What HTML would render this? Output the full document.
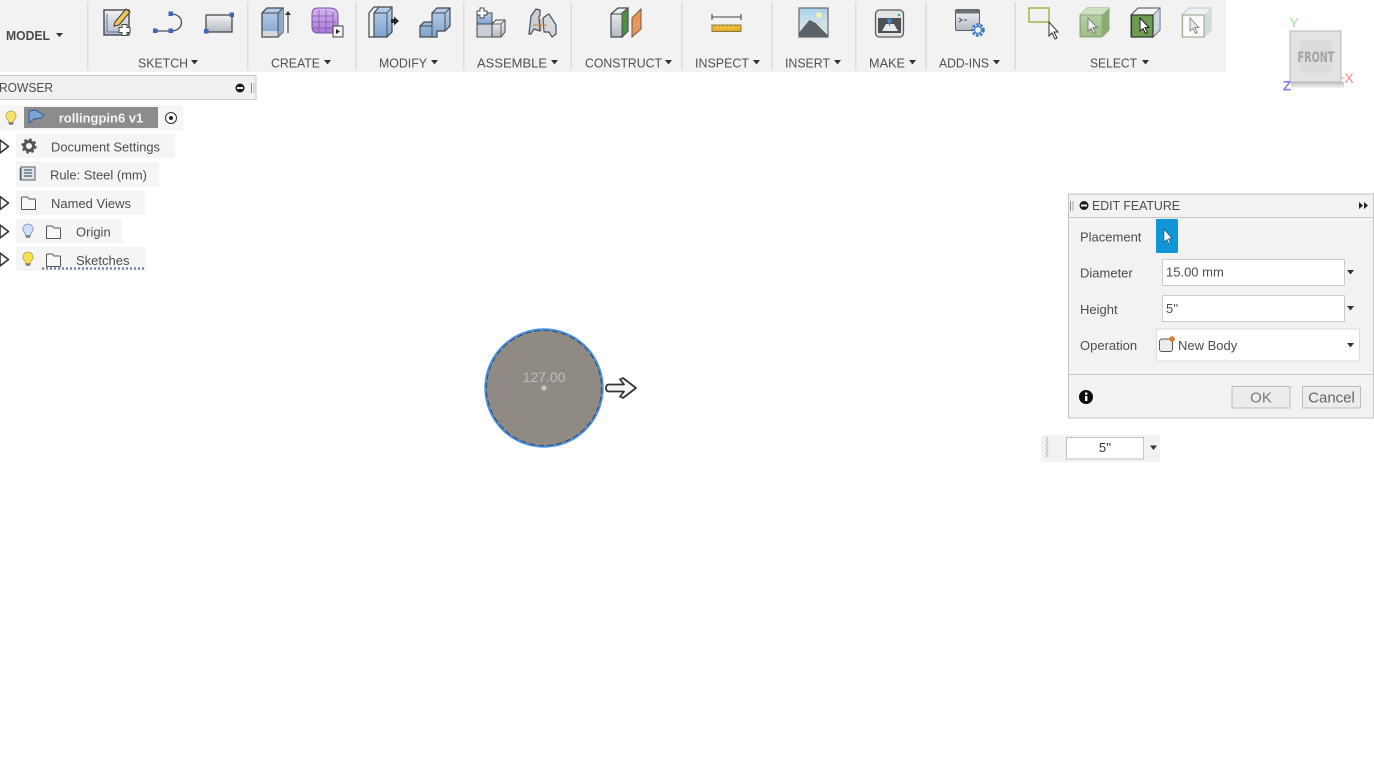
<!DOCTYPE html>
<html><head><meta charset="utf-8"><style>
html,body{margin:0;padding:0;background:#fff;width:1374px;height:773px;overflow:hidden}
svg{display:block;filter:blur(.3px)}
text{font-family:"Liberation Sans",sans-serif}
.l{font-size:13px;fill:#505050}
.t{font-size:13px;fill:#4d4d4d}
.s{stroke:#45494e;stroke-width:1.4}
</style></head><body>
<svg width="1374" height="773" viewBox="0 0 1374 773" xmlns="http://www.w3.org/2000/svg">
<defs>
<linearGradient id="bl" x1="0" y1="0" x2="0" y2="1"><stop offset="0" stop-color="#b8d0ea"/><stop offset="1" stop-color="#7fa3cc"/></linearGradient>
<linearGradient id="gr" x1="0" y1="0" x2="0" y2="1"><stop offset="0" stop-color="#f2f3f5"/><stop offset="1" stop-color="#b4b9c2"/></linearGradient>
<linearGradient id="sky" x1="0" y1="0" x2="0" y2="1"><stop offset="0" stop-color="#a8d0ec"/><stop offset="1" stop-color="#eef3e6"/></linearGradient>
<linearGradient id="pu" x1="0" y1="0" x2="0" y2="1"><stop offset="0" stop-color="#d5b5ee"/><stop offset="1" stop-color="#a878d6"/></linearGradient>
<linearGradient id="gc" x1="0" y1="0" x2="0" y2="1"><stop offset="0" stop-color="#bcd3aa"/><stop offset="1" stop-color="#9dbd88"/></linearGradient>
<linearGradient id="ruler" x1="0" y1="0" x2="0" y2="1"><stop offset="0" stop-color="#f5cd4a"/><stop offset="1" stop-color="#dfa520"/></linearGradient>
<linearGradient id="sh" x1="0" y1="0" x2="0" y2="1"><stop offset="0" stop-color="#bdbdbd"/><stop offset="1" stop-color="#f4f4f4"/></linearGradient>
</defs>
<rect width="1374" height="773" fill="#fff"/>
<!-- toolbar -->
<rect x="0" y="0" width="1226" height="72" fill="#f2f2f2"/>
<g fill="#dcdcdc">
<rect x="87" y="2" width="1.5" height="68"/><rect x="247" y="2" width="1.5" height="68"/><rect x="355" y="2" width="1.5" height="68"/><rect x="463" y="2" width="1.5" height="68"/><rect x="570.500" y="2" width="1.5" height="68"/><rect x="681" y="2" width="1.5" height="68"/><rect x="771.500" y="2" width="1.5" height="68"/><rect x="855" y="2" width="1.5" height="68"/><rect x="925" y="2" width="1.5" height="68"/><rect x="1014.500" y="2" width="1.5" height="68"/>
</g>
<text x="6" y="40" font-weight="bold" fill="#4a4a4a" style="font-size:13px" textLength="44" lengthAdjust="spacingAndGlyphs">MODEL</text>
<path d="M56 33h7l-3.5 4z" fill="#333"/>
<g>
<text class="l" x="138" y="67.500" textLength="50" lengthAdjust="spacingAndGlyphs">SKETCH</text><path d="M191 60h7l-3.500 4.500z" fill="#333"/>
<text class="l" x="271" y="67.500" textLength="49" lengthAdjust="spacingAndGlyphs">CREATE</text><path d="M324 60h7l-3.500 4.500z" fill="#333"/>
<text class="l" x="379" y="67.500" textLength="48" lengthAdjust="spacingAndGlyphs">MODIFY</text><path d="M431 60h7l-3.500 4.500z" fill="#333"/>
<text class="l" x="477" y="67.500" textLength="70" lengthAdjust="spacingAndGlyphs">ASSEMBLE</text><path d="M551 60h7l-3.500 4.500z" fill="#333"/>
<text class="l" x="585" y="67.500" textLength="77" lengthAdjust="spacingAndGlyphs">CONSTRUCT</text><path d="M665 60h7l-3.500 4.500z" fill="#333"/>
<text class="l" x="695" y="67.500" textLength="54" lengthAdjust="spacingAndGlyphs">INSPECT</text><path d="M753 60h7l-3.500 4.500z" fill="#333"/>
<text class="l" x="785" y="67.500" textLength="45" lengthAdjust="spacingAndGlyphs">INSERT</text><path d="M834 60h7l-3.500 4.500z" fill="#333"/>
<text class="l" x="869" y="67.500" textLength="36" lengthAdjust="spacingAndGlyphs">MAKE</text><path d="M909 60h7l-3.500 4.500z" fill="#333"/>
<text class="l" x="939" y="67.500" textLength="50" lengthAdjust="spacingAndGlyphs">ADD-INS</text><path d="M993 60h7l-3.500 4.500z" fill="#333"/>
<text class="l" x="1090" y="67.500" textLength="47" lengthAdjust="spacingAndGlyphs">SELECT</text><path d="M1142 60h7l-3.500 4.500z" fill="#333"/>
</g>
<!-- sketch create -->
<rect x="104" y="10" width="25" height="25" fill="url(#gr)" class="s"/>
<path d="M107 14v18h18" fill="none" stroke="#4a78c0" stroke-width="1"/>
<path d="M115 22l11-13 4 3-11 13-5 1z" fill="#f0c850" stroke="#444" stroke-width="1.1"/>
<path d="M121 25h5v3h3v5h-3v3h-5v-3h-3v-5h3z" transform="translate(1 -.5)" fill="#fff" stroke="#444" stroke-width="1"/>
<!-- line -->
<path d="M155 31h16M171 14c14 0 14 17 0 17" fill="none" stroke="#4a4f55" stroke-width="1.3"/>
<g fill="#3f68b8"><rect x="153" y="28.500" width="4.500" height="4.500"/><rect x="168.500" y="28.500" width="4.500" height="4.500"/><rect x="168.500" y="11.500" width="4.500" height="4.500"/></g>
<!-- rect -->
<rect x="206" y="15" width="26" height="17" fill="url(#gr)" stroke="#45494e" stroke-width="1.3"/>
<rect x="229.500" y="12.500" width="4.500" height="4.500" fill="#3f68b8"/><rect x="204" y="29" width="4.500" height="4.500" fill="#3f68b8"/>
<!-- extrude -->
<path d="M262 13l5-5h16v24l-5 5h-16z" fill="url(#bl)" stroke="#45494e" stroke-width="1.3"/>
<path d="M278 13l5-5v24l-5 5z" fill="#8fabc9"/>
<path d="M262 13h16l5-5M278 13v24" fill="none" stroke="#45494e" stroke-width="1"/>
<rect x="262.700" y="31" width="15" height="5.300" fill="#d6d8da"/>
<path d="M288 33V14" stroke="#666" stroke-width="1.500"/><path d="M285 15l3-4 3 4z" fill="#333"/>
<!-- form -->
<path d="M312 14q0-6 6-6h12q8 0 8 8v12q0 5-5 5h-15q-6 0-6-6z" fill="url(#pu)" stroke="#7a54a8" stroke-width="1"/>
<path d="M312 16h22M312 22h24M312 28h24M319 10v23M326 10v23M333 12v20" stroke="#7d58ad" stroke-width=".8" fill="none"/>
<rect x="333" y="26" width="10" height="11" fill="#f5f5f5" stroke="#444"/><path d="M336 29l4 2.500-4 2.500z" fill="#222"/>
<!-- press pull -->
<path d="M369 13l5-6h5v28l-5 2h-5z" fill="#f3f3f3" stroke="#45494e" stroke-width="1.200"/>
<path d="M374 13l5-6h13v25l-5 5h-13z" fill="url(#bl)" stroke="#45494e" stroke-width="1.200"/>
<path d="M374 13h13l5-6M387 13v24" stroke="#45494e" stroke-width=".9" fill="none"/>
<path d="M391 19h3v-2.500l5 4.500-5 4.500v-2.500h-3z" fill="#2b2b2b"/>
<!-- combine -->
<path d="M420 26l4-4h8v-9l5-5h13v18l-5 5h-8v6h-17z" fill="url(#bl)" stroke="#45494e" stroke-width="1.200"/>
<path d="M432 13h13l5-5M445 13v18M420 26h12v11M432 22v4" stroke="#45494e" stroke-width=".9" fill="none"/>
<!-- assemble -->
<rect x="477" y="13" width="15" height="11" fill="url(#bl)" stroke="#45494e"/>
<rect x="477" y="24" width="15" height="13" fill="#c8ced6" stroke="#45494e"/>
<path d="M492 24l4-4h9v12l-4 5h-9z" fill="url(#gr)" stroke="#45494e"/>
<path d="M492 24h9l4-4M501 24v13" stroke="#45494e" stroke-width=".8" fill="none"/>
<path d="M480 8h4v3h3v4h-3v3h-4v-3h-3v-4h3z" fill="#fff" stroke="#444"/>
<!-- joint -->
<path d="M529 34l2-18 5-7 4 1v5l-1 2 1 14-6-2-3 5z" fill="#c9ced5" stroke="#4a4f55" stroke-width="1.200"/>
<path d="M544 32l-1-14 4-3 2-1 7 11v9l-4 3-3-5z" fill="#d3d8de" stroke="#4a4f55" stroke-width="1.200"/>
<path d="M533 25h14M541 19v12" stroke="#c98a50" stroke-width="1" fill="none"/>
<!-- construct -->
<path d="M611 14l7-6h10v23l-6 6h-11z" fill="url(#gr)" stroke="#45494e" stroke-width="1.200"/>
<path d="M622 13l6-5v23l-6 6z" fill="#4e9146" stroke="#45494e" stroke-width=".9"/>
<path d="M611 14h11" stroke="#45494e"/>
<path d="M632 18l9-9v20l-9 8z" fill="#e8965a" stroke="#7a5a42" stroke-width="1"/>
<!-- inspect -->
<path d="M712 17h29M712 14v6M741 14v6" stroke="#444" stroke-width="1.100" fill="none"/>
<rect x="712" y="25" width="29" height="6.500" fill="url(#ruler)" stroke="#8d7a3c" stroke-width="1"/>
<path d="M715 25v2M719 25v2M723 25v2M727 25v2M731 25v2M735 25v2M738 25v2" stroke="#8d7a3c" stroke-width=".7"/>
<!-- insert -->
<rect x="799" y="8" width="29" height="29" fill="url(#sky)" stroke="#666" stroke-width="1.200"/>
<circle cx="819" cy="15" r="3" fill="#f5efb0"/>
<path d="M799.500 32l10-12 6 3 12 12v1.500h-28z" fill="#5b6268"/>
<path d="M815 22l12 9v-4z" fill="#c8d8d8" opacity=".7"/>
<!-- make -->
<rect x="875.500" y="10" width="28" height="27" rx="4" fill="#e2e4e6" stroke="#5a5d62" stroke-width="1.300"/>
<rect x="878" y="18" width="23" height="15" fill="#4c5157"/>
<circle cx="899" cy="15" r="1.200" fill="#3da060"/>
<path d="M882 31l4-7h8l4 7z" fill="#e8eaec"/><path d="M887 19h5l-1 4h-1v3h-1v-3h-1z" fill="#4a88d0"/>
<!-- add-ins -->
<rect x="955.500" y="9.500" width="24" height="21" rx="1.500" fill="url(#gr)" stroke="#5a5f66" stroke-width="1"/>
<rect x="955.500" y="9.500" width="24" height="4" fill="#6a6f76"/>
<path d="M959 18l3 2-3 2M964 20h3" stroke="#444" stroke-width=".9" fill="none"/>
<circle cx="978" cy="30" r="5.500" fill="#f2f2f2" stroke="#3f78c0" stroke-width="2.600" stroke-dasharray="2.600 1.400"/>
<circle cx="978" cy="30" r="3.500" fill="#f2f2f2" stroke="#3f78c0" stroke-width="1.200"/>
<!-- select -->
<rect x="1029" y="8" width="20" height="14" fill="none" stroke="#9cb84a" stroke-width="1.500"/>
<path d="M1049 22v14l3-3 3 6 2-1-3-6h4z" fill="#fff" stroke="#333" stroke-width="1"/>
<path d="M1080 15l7-7h22v22l-7 7h-22z" fill="url(#gc)" stroke="#8fab7e" stroke-width="1"/>
<path d="M1102 15l7-7v22l-7 7z" fill="#88ac72"/><path d="M1080 15l7-7h22l-7 7z" fill="#d0dfc2"/>
<rect x="1080.500" y="15" width="21.500" height="21.500" fill="none" stroke="#8fab7e"/>
<path d="M1088 18v13l3-2.500 2.500 5 2-1-2.500-5h4z" fill="#f0f0f0" stroke="#777" stroke-width=".9"/>
<path d="M1131 15l7-7h22v22l-7 7h-22z" fill="#f4f4f4" stroke="#444a52" stroke-width="1"/>
<path d="M1153 15l7-7v22l-7 7z" fill="#cfd8e2" stroke="#6a7482" stroke-width=".8"/>
<rect x="1131.500" y="15" width="21.500" height="22" fill="#6f9c50" stroke="#2d3b28" stroke-width="1.200"/>
<path d="M1140 18v13l3-2.500 2.500 5 2-1-2.500-5h4z" fill="#fff" stroke="#222" stroke-width="1"/>
<path d="M1182 15l7-7h22v22l-7 7h-22z" fill="#eef0f1" stroke="#c4c9ce" stroke-width="1"/>
<path d="M1204 15l7-7v22l-7 7z" fill="#d2dae2"/>
<rect x="1182.500" y="15" width="21.500" height="22" fill="#fbfbfb" stroke="#9db08e" stroke-width="1.200"/>
<path d="M1190 18v13l3-2.500 2.500 5 2-1-2.500-5h4z" fill="#e8e8e8" stroke="#888" stroke-width=".9"/>
<!-- view cube -->
<rect x="1291" y="82" width="53" height="6" fill="url(#sh)"/>
<rect x="1290" y="31" width="51" height="51" fill="#e3e3e3" stroke="#b4b4b4" stroke-width="1"/>
<rect x="1300" y="40" width="32" height="33" fill="#dcdcdc"/>
<text x="1316" y="62" style="font-size:14px;font-family:'DejaVu Sans Condensed','DejaVu Sans',sans-serif;font-weight:bold" fill="#a2a2a2" text-anchor="middle" textLength="37" lengthAdjust="spacingAndGlyphs">FRONT</text>
<text x="1294" y="27.500" style="font-size:14px" fill="#a0e4a0" text-anchor="middle">Y</text>
<text x="1349" y="83" style="font-size:14px" fill="#f08a80" text-anchor="middle">X</text>
<text x="1287" y="90.500" style="font-size:14px;font-weight:bold" fill="#8080e4" text-anchor="middle">Z</text>
<path d="M1341 78h4" stroke="#f0a098"/>
<!-- browser -->
<rect x="-2" y="75.500" width="258" height="24" fill="#f0f0f0" stroke="#c8c8c8"/>
<text class="t" x="-1" y="92" textLength="54" lengthAdjust="spacingAndGlyphs">ROWSER</text>
<circle cx="240" cy="88" r="4.500" fill="#1a1a1a"/><rect x="237" y="87" width="6" height="2" fill="#eee"/>
<rect x="251" y="83" width="1" height="10" fill="#888"/><rect x="253.500" y="83" width="1" height="10" fill="#bbb"/>
<g fill="#f5f5f5">
<rect x="0" y="105" width="183" height="25"/><rect x="16" y="134" width="159" height="24"/><rect x="16" y="162" width="143" height="25"/><rect x="16" y="191" width="129" height="24"/><rect x="16" y="219" width="106" height="24"/><rect x="16" y="247" width="130" height="24"/>
</g>
<rect x="24" y="107" width="134" height="21" fill="#8c8c8c"/>
<text x="101" y="122.500" text-anchor="middle" fill="#f4f4f4" style="font-size:13px;font-weight:bold">rollingpin6 v1</text>
<path d="M29 111l6-1 9 5-3 3-7 1-5 4z" fill="#7aa5d5" stroke="#2d5e9c" stroke-width="1"/>
<circle cx="171" cy="118" r="5.500" fill="#fff" stroke="#333" stroke-width="1"/><circle cx="171" cy="118" r="2" fill="#222"/>
<!-- bulbs -->
<g><path d="M11 111a5 5 0 0 1 3 9l-.5 2.500h-5l-.5-2.500a5 5 0 0 1 3-9z" fill="#f7e36a" stroke="#b0a060" stroke-width=".8"/><rect x="8.800" y="122.500" width="4.500" height="2.200" fill="#777"/></g>
<g transform="translate(17 113)"><path d="M11 111a5 5 0 0 1 3 9l-.5 2.500h-5l-.5-2.500a5 5 0 0 1 3-9z" fill="#cfe0f7" stroke="#7a90b8" stroke-width=".8"/><rect x="8.800" y="122.500" width="4.500" height="2.200" fill="#777"/></g>
<g transform="translate(17 141)"><path d="M11 111a5 5 0 0 1 3 9l-.5 2.500h-5l-.5-2.500a5 5 0 0 1 3-9z" fill="#f7e04a" stroke="#b0a060" stroke-width=".8"/><rect x="8.800" y="122.500" width="4.500" height="2.200" fill="#777"/></g>
<!-- expanders -->
<g fill="#fbfbfb" stroke="#333" stroke-width="1.600" stroke-linejoin="round">
<path d="M0 140l8.500 6.500-8.500 6.500z"/><path d="M0 196.500l8.500 6.500-8.500 6.500z"/><path d="M0 225l8.500 6.500-8.500 6.500z"/><path d="M0 253l8.500 6.500-8.500 6.500z"/>
</g>
<!-- gear -->
<circle cx="29" cy="146" r="4.500" fill="none" stroke="#555" stroke-width="3"/>
<circle cx="29" cy="146" r="6.500" fill="none" stroke="#555" stroke-width="2.200" stroke-dasharray="2.600 2.500"/>
<!-- rule icon -->
<rect x="21" y="167" width="14" height="13" fill="#dfe4e8" stroke="#55606a" stroke-width="1"/>
<path d="M24 170h8M24 173h8M24 176h8" stroke="#55606a" stroke-width="1.200"/><path d="M20.500 168v12" stroke="#55606a" stroke-width="1.600"/>
<!-- folders (tabbed) -->
<g fill="#f7f7f7" stroke="#555" stroke-width="1" stroke-linejoin="round">
<path id="f1" d="M21.500 198q0-1 1-1h5l1.500 2h6q.5 0 .5 1v9.500h-14z"/>
<path d="M46.500 227q0-1 1-1h5l1.500 2h6q.5 0 .5 1v9.500h-14z"/>
<path d="M46.500 255q0-1 1-1h5l1.500 2h6q.5 0 .5 1v9.500h-14z"/>
</g>
<text class="t" x="51" y="151.500" textLength="109" lengthAdjust="spacingAndGlyphs">Document Settings</text>
<text class="t" x="50" y="179.500" textLength="97" lengthAdjust="spacingAndGlyphs">Rule: Steel (mm)</text>
<text class="t" x="51" y="208">Named Views</text>
<text class="t" x="76" y="236.500">Origin</text>
<text class="t" x="76" y="265">Sketches</text>
<path d="M42 268.500H146" stroke="#6a8098" stroke-width="2.200" stroke-dasharray="2 2"/>
<!-- circle -->
<circle cx="544" cy="388" r="58" fill="#8f8b84"/>
<circle cx="544" cy="388" r="58.500" fill="none" stroke="#4a8fe0" stroke-width="2.400"/>
<circle cx="544" cy="388" r="57.500" fill="none" stroke="#2b3a4a" stroke-width=".8" stroke-dasharray="6 3"/>
<text x="544" y="382" text-anchor="middle" fill="#bdbdbd" style="font-size:14px">127.00</text>
<circle cx="544" cy="388" r="2.700" fill="#c4c4c4"/>
<path d="M609 384.500H624L620 379.500 623 378 636 388 623 398 620 396.500 624 391.500H609Q606 391.500 606 388T609 384.500Z" fill="#f4f4f4" stroke="#333" stroke-width="1.800" stroke-linejoin="round"/>
<!-- panel -->
<rect x="1068.500" y="194" width="305" height="224" fill="#f2f2f2" stroke="#c2c2c2"/>
<path d="M1069 217.500h304M1069 374.500h304" stroke="#c8c8c8"/>
<rect x="1070" y="201" width="1" height="10" fill="#888"/><rect x="1072.500" y="201" width="1" height="10" fill="#aaa"/>
<circle cx="1084" cy="205.500" r="4.500" fill="#1a1a1a"/><rect x="1081" y="204.500" width="6" height="2" fill="#eee"/>
<text class="t" x="1092" y="210" textLength="88" lengthAdjust="spacingAndGlyphs">EDIT FEATURE</text>
<path d="M1359 202l4 3.500-4 3.500zM1364 202l4 3.500-4 3.500z" fill="#222"/>
<text class="t" x="1080" y="241.500">Placement</text>
<rect x="1156" y="219" width="22" height="34" rx="1" fill="#0e96d6"/>
<path d="M1164 229v13l3-2.500 2 4.500 1.500-.7-2-4.500 3.500-.3z" fill="#fff" stroke="#0a4a70" stroke-width=".6"/>
<text class="t" x="1080" y="277.500">Diameter</text>
<rect x="1162.500" y="259.500" width="182" height="26" fill="#fff" stroke="#ccc"/>
<text class="t" x="1166" y="276.500" fill="#444">15.00 mm</text>
<path d="M1347 270h7l-3.500 4.500z" fill="#333"/>
<text class="t" x="1080" y="314">Height</text>
<rect x="1162.500" y="295.500" width="182" height="26" fill="#fff" stroke="#ccc"/>
<text class="t" x="1166" y="313">5''</text>
<path d="M1347 306h7l-3.500 4.500z" fill="#333"/>
<text class="t" x="1080" y="350">Operation</text>
<rect x="1156.500" y="329" width="203" height="32" fill="#fff" stroke="#dcdcdc"/>
<rect x="1159.500" y="339" width="13" height="12.500" rx="2.500" fill="#e8ecef" stroke="#555" stroke-width="1"/>
<circle cx="1172" cy="339" r="2.800" fill="#e8762a"/>
<text class="t" x="1178" y="350">New Body</text>
<path d="M1347 343h7l-3.500 4.500z" fill="#333"/>
<circle cx="1086" cy="397" r="7" fill="#0c0c0c"/>
<rect x="1085" y="396" width="2.400" height="5" fill="#fff"/><rect x="1085" y="392.500" width="2.400" height="2.200" fill="#fff"/>
<rect x="1232" y="386.500" width="58" height="21.500" fill="#ececec" stroke="#bdbdbd"/>
<text x="1261" y="402.500" text-anchor="middle" fill="#777" style="font-size:15px">OK</text>
<rect x="1302.500" y="386.500" width="58" height="21.500" fill="#ececec" stroke="#bdbdbd"/>
<text x="1331.500" y="402.500" text-anchor="middle" fill="#666" style="font-size:15px">Cancel</text>
<!-- mini input -->
<rect x="1041" y="435" width="119" height="27" fill="#f2f2f2"/>
<path d="M1046 437l2 2-2 2 2 2-2 2 2 2-2 2 2 2-2 2 2 2-2 2" fill="none" stroke="#c8c8c8" stroke-width="1.300"/>
<rect x="1066.500" y="437.500" width="77" height="21.500" fill="#fff" stroke="#c4c4c4"/>
<text x="1105" y="452" text-anchor="middle" fill="#333" style="font-size:13px">5''</text>
<path d="M1150 445.500h7l-3.500 4.500z" fill="#333"/>
</svg>
</body></html>
